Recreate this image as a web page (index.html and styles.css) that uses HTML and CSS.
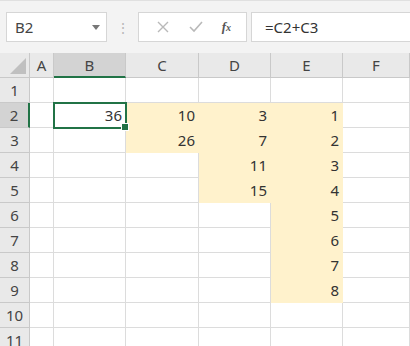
FILE: index.html
```html
<!DOCTYPE html>
<html lang="en">
  <head>
    <meta charset="UTF-8" />
    <title>Sheet</title>
    <link rel="stylesheet" href="styles.css">
  </head>
  <body>
    <div class="toolbar">
      <div class="namebox">
        <span>B2</span>
        <span class="caret"></span>
      </div>
      <div class="dots">&#8942;</div>
      <div class="fbtns">
        <svg class="ico" width="14" height="14" viewBox="0 0 14 14"><path d="M2 2L12 12M12 2L2 12" stroke="#b9b9b9" stroke-width="1.4" fill="none"/></svg>
        <svg class="ico" width="16" height="14" viewBox="0 0 16 14"><path d="M2 7L6 11L14 2" stroke="#b9b9b9" stroke-width="1.6" fill="none"/></svg>
        <span class="fx">f<span class="fx-x">x</span></span>
      </div>
      <div class="formula">=C2+C3</div>
    </div>

    <div class="sheet">
      <div class="hd corner"><span class="tri"></span></div>
      <div class="hd col">A</div>
      <div class="hd col sel">B</div>
      <div class="hd col">C</div>
      <div class="hd col">D</div>
      <div class="hd col">E</div>
      <div class="hd col">F</div>

      <div class="hd row">1</div>
      <div class="c"></div><div class="c"></div><div class="c"></div><div class="c"></div><div class="c"></div><div class="c"></div>

      <div class="hd row sel">2</div>
      <div class="c"></div><div class="c active">36</div><div class="c y">10</div><div class="c y">3</div><div class="c y">1</div><div class="c"></div>

      <div class="hd row">3</div>
      <div class="c"></div><div class="c"></div><div class="c y">26</div><div class="c y">7</div><div class="c y">2</div><div class="c"></div>

      <div class="hd row">4</div>
      <div class="c"></div><div class="c"></div><div class="c"></div><div class="c y">11</div><div class="c y">3</div><div class="c"></div>

      <div class="hd row">5</div>
      <div class="c"></div><div class="c"></div><div class="c"></div><div class="c y">15</div><div class="c y">4</div><div class="c"></div>

      <div class="hd row">6</div>
      <div class="c"></div><div class="c"></div><div class="c"></div><div class="c"></div><div class="c y">5</div><div class="c"></div>

      <div class="hd row">7</div>
      <div class="c"></div><div class="c"></div><div class="c"></div><div class="c"></div><div class="c y">6</div><div class="c"></div>

      <div class="hd row">8</div>
      <div class="c"></div><div class="c"></div><div class="c"></div><div class="c"></div><div class="c y">7</div><div class="c"></div>

      <div class="hd row">9</div>
      <div class="c"></div><div class="c"></div><div class="c"></div><div class="c"></div><div class="c y">8</div><div class="c"></div>

      <div class="hd row">10</div>
      <div class="c"></div><div class="c"></div><div class="c"></div><div class="c"></div><div class="c"></div><div class="c"></div>

      <div class="hd row">11</div>
      <div class="c"></div><div class="c"></div><div class="c"></div><div class="c"></div><div class="c"></div><div class="c"></div>
    </div>
  </body>
</html>
```

FILE: styles.css
```css
* {
  margin: 0;
  padding: 0;
  box-sizing: border-box;
}
body {
  font-family: "Noto Sans", "Open Sans", sans-serif;
  background-color: #ffffff;
  color: #333333;
  width: 410px;
  height: 346px;
  overflow: hidden;
}

.toolbar {
  display: flex;
  align-items: center;
  height: 53px;
  padding: 0 0 0 6px;
  background-color: #f3f3f3;
  border-top: 1px solid #e0e0e0;
}

.namebox {
  display: flex;
  align-items: center;
  justify-content: space-between;
  width: 101px;
  height: 30px;
  padding: 0 6px 0 8px;
  background-color: #ffffff;
  border: 1px solid #d6d6d6;
  font-size: 15px;
  color: #444444;
}

.caret {
  width: 0;
  height: 0;
  border-left: 4px solid transparent;
  border-right: 4px solid transparent;
  border-top: 5px solid #777777;
}

.dots {
  width: 31px;
  text-align: center;
  color: #b8b8b8;
  font-size: 14px;
}

.fbtns {
  display: flex;
  align-items: center;
  justify-content: space-around;
  width: 109px;
  height: 30px;
  padding: 0 6px 0 8px;
  background-color: #ffffff;
  border: 1px solid #d6d6d6;
}

.fx {
  font-family: "Liberation Serif", serif;
  font-style: italic;
  font-weight: bold;
  font-size: 13px;
  color: #555555;
}
.fx-x {
  font-size: 10px;
}

.formula {
  flex: 1;
  height: 30px;
  margin-left: 4px;
  padding: 4px 0 0 13px;
  background-color: #ffffff;
  border: 1px solid #d6d6d6;
  border-right: none;
  font-size: 15px;
  color: #333333;
}

.sheet {
  display: grid;
  grid-template-columns: 30px 24px 72px 73px 72px 72px 67px;
  grid-auto-rows: 25px;
}

.hd {
  display: flex;
  align-items: center;
  justify-content: center;
  background-color: #e9e9e9;
  border-right: 1px solid #c9c9c9;
  border-bottom: 1px solid #c9c9c9;
  font-size: 15px;
  color: #444444;
}
.hd.sel {
  background-color: #d3d3d3;
  border-bottom: 2px solid #217346;
}
.hd.row.sel {
  border-bottom: 1px solid #c9c9c9;
  border-right: 2px solid #217346;
}

.corner {
  position: relative;
}
.tri {
  position: absolute;
  right: 3px;
  bottom: 3px;
  width: 0;
  height: 0;
  border-left: 16px solid transparent;
  border-bottom: 16px solid #c0c0c0;
}

.c {
  display: flex;
  align-items: center;
  justify-content: flex-end;
  padding-right: 3px;
  border-right: 1px solid #dcdcdc;
  border-bottom: 1px solid #dcdcdc;
  font-size: 15px;
  color: #333333;
}
.c.y {
  background-color: #fff2cc;
  border-color: #fff2cc;
}

.active {
  position: relative;
  outline: 2px solid #217346;
  outline-offset: -1px;
}
.active::after {
  content: "";
  position: absolute;
  right: -4px;
  bottom: -4px;
  width: 6px;
  height: 6px;
  background-color: #217346;
  border: 1px solid #ffffff;
}
```
